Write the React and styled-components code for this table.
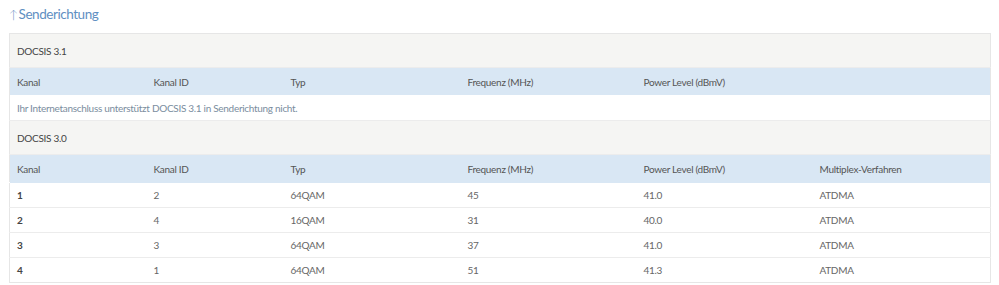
import React from "react";
import styled, { createGlobalStyle } from "styled-components";

const Global = createGlobalStyle`
  html, body { margin: 0; padding: 0; background: #ffffff; }
  body { font-family: Lato, "Liberation Sans", sans-serif; }
`;

const Page = styled.div`
  padding: 5px 9px 0 9px;
  width: 981px;
`;

const Title = styled.h2`
  margin: 0 0 9px 0;
  height: 19px;
  font-size: 13.5px;
  font-weight: 400;
  letter-spacing: -0.45px;
  color: #5f8fc2;
  line-height: 19px;
  display: flex;
  align-items: center;
  gap: 1px;
`;

const Arrow = styled.span`
  font-size: 12px;
  font-weight: 300;
`;

const Table = styled.table`
  width: 981px;
  border-collapse: collapse;
  table-layout: fixed;
  border: 1px solid #e6e6e6;
  font-size: 10px;
  letter-spacing: -0.3px;
  color: #555;
`;

const SectionCell = styled.td`
  background: #f5f5f3;
  height: 33px;
  padding: 0 7px;
  border-bottom: 1px solid #ececec;
  color: #444;
`;

const HeadCell = styled.th`
  background: #d9e7f4;
  height: 27px;
  padding: 0 7px;
  text-align: left;
  font-weight: 400;
  color: #555;
`;

const Cell = styled.td`
  height: 24px;
  padding: 0 7px;
  border-top: 1px solid ${(p) => (p.$first ? "transparent" : "#ececec")};
  font-weight: ${(p) => (p.$bold ? 700 : 400)};
  color: ${(p) => (p.$bold ? "#444" : "#666")};
`;

const Message = styled.td`
  height: 25px;
  padding: 0 7px;
  color: #7a8d9e;
  border-bottom: 1px solid #ececec;
`;

const cols = ["Kanal", "Kanal ID", "Typ", "Frequenz (MHz)", "Power Level (dBmV)", "Multiplex-Verfahren"];
const widths = [137, 137, 177, 176, 176, 178];

const rows = [
  ["1", "2", "64QAM", "45", "41.0", "ATDMA"],
  ["2", "4", "16QAM", "31", "40.0", "ATDMA"],
  ["3", "3", "64QAM", "37", "41.0", "ATDMA"],
  ["4", "1", "64QAM", "51", "41.3", "ATDMA"],
];

export default function App() {
  return (
    <>
      <Global />
      <Page>
        <Title>
          <Arrow>↑</Arrow>
          <span>Senderichtung</span>
        </Title>
        <Table>
          <colgroup>
            {widths.map((w, i) => (
              <col key={i} style={{ width: w }} />
            ))}
          </colgroup>
          <tbody>
            <tr>
              <SectionCell colSpan={6}>DOCSIS 3.1</SectionCell>
            </tr>
            <tr>
              {cols.slice(0, 5).map((c) => (
                <HeadCell key={c}>{c}</HeadCell>
              ))}
              <HeadCell />
            </tr>
            <tr>
              <Message colSpan={6}>
                Ihr Internetanschluss unterstützt DOCSIS 3.1 in Senderichtung nicht.
              </Message>
            </tr>
            <tr>
              <SectionCell colSpan={6}>DOCSIS 3.0</SectionCell>
            </tr>
            <tr>
              {cols.map((c) => (
                <HeadCell key={c}>{c}</HeadCell>
              ))}
            </tr>
            {rows.map((r, ri) => (
              <tr key={ri}>
                {r.map((v, ci) => (
                  <Cell key={ci} $bold={ci === 0} $first={ri === 0}>
                    {v}
                  </Cell>
                ))}
              </tr>
            ))}
          </tbody>
        </Table>
      </Page>
    </>
  );
}
